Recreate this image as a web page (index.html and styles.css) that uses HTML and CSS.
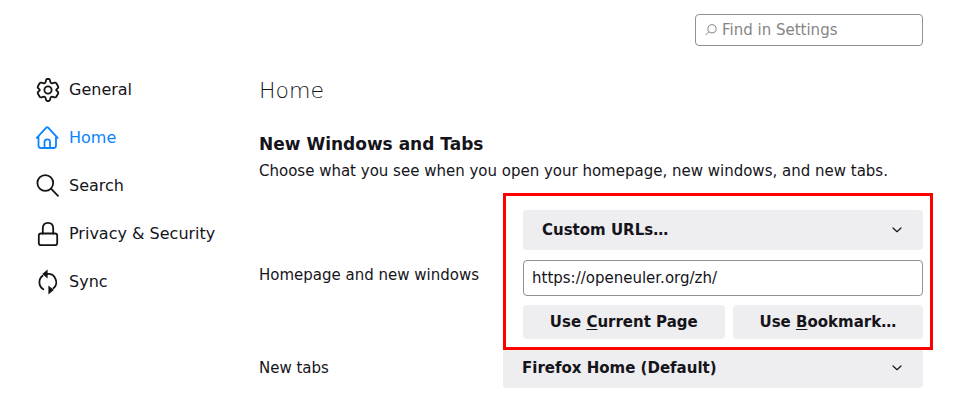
FILE: index.html
```html
<!DOCTYPE html>
<html lang="en">
<head>
<meta charset="utf-8">
<title>Settings</title>
<link rel="stylesheet" href="styles.css">
</head>
<body>
<div class="layout">
  <nav class="sidebar" aria-label="Settings categories">
    <a class="category" href="#general">
      <svg class="category-icon" viewBox="0 0 24 24" aria-hidden="true"><path d="M10.2 1.8Q10.5 1 11.3 1H12.7Q13.5 1 13.8 1.8L14.5 4.3Q15 5.1 16 5.4L18.8 4.7Q19.8 4.5 20.3 5.2L22.2 8.5Q22.6 9.2 22 10L20.3 11.7Q20 12 20.3 12.3L22 14Q22.6 14.8 22.2 15.5L20.3 18.8Q19.8 19.5 18.8 19.3L16 18.6Q15 18.9 14.5 19.7L13.8 22.2Q13.5 23 12.7 23H11.3Q10.5 23 10.2 22.2L9.5 19.7Q9 18.9 8 18.6L5.2 19.3Q4.2 19.5 3.7 18.8L1.8 15.5Q1.4 14.8 2 14L3.7 12.3Q4 12 3.7 11.7L2 10Q1.4 9.2 1.8 8.5L3.7 5.2Q4.2 4.5 5.2 4.7L8 5.4Q9 5.1 9.5 4.3Z"/><circle cx="12" cy="12" r="3.6"/></svg>
      <span>General</span>
    </a>
    <a class="category selected" href="#home" aria-current="page">
      <svg class="category-icon" viewBox="0 0 24 24" aria-hidden="true"><path d="M.8 11.8 10 1.8Q11.2.7 12.4 1.8L21.6 11.8M2.5 10V19.5Q2.5 22 5 22H17.5Q20 22 20 19.5V10M8.5 22V16Q8.5 13.3 11.3 13.3T14 16V22"/></svg>
      <span>Home</span>
    </a>
    <a class="category" href="#search">
      <svg class="category-icon" viewBox="0 0 24 24" aria-hidden="true"><circle cx="9.3" cy="9" r="7.9"/><path d="M15 14.7 22 21.8"/></svg>
      <span>Search</span>
    </a>
    <a class="category" href="#privacy">
      <svg class="category-icon" viewBox="0 0 24 24" aria-hidden="true"><rect x="2.8" y="11.5" width="18.4" height="11.7" rx="2.2"/><path d="M6.8 11.5V6Q7 .8 12 .8T17.2 6V11.5"/></svg>
      <span>Privacy &amp; Security</span>
    </a>
    <a class="category" href="#sync">
      <svg class="category-icon" viewBox="0 0 24 24" aria-hidden="true"><path d="M6.6 5.7A8.2 8.2 0 0 0 7.3 19.2M17.4 18.3A8.2 8.2 0 0 0 11 4"/><path class="solid" d="M11.6-.4V8.4L6.2 4ZM12.4 15.6V24.4L17.8 20Z"/></svg>
      <span>Sync</span>
    </a>
  </nav>

  <main class="content">
    <div class="search-field">
      <svg class="search-icon" viewBox="0 0 12 12" aria-hidden="true"><circle cx="7" cy="4.8" r="4.1"/><path d="M4 7.7.7 11"/></svg>
      <input class="search-input" type="search" placeholder="Find in Settings" aria-label="Find in Settings">
    </div>

    <h1 class="title">Home</h1>
    <h2 class="heading">New Windows and Tabs</h2>
    <p class="description">Choose what you see when you open your homepage, new windows, and new tabs.</p>

    <div class="row homepage-row">
      <label for="homepage-mode">Homepage and new windows</label>
      <div class="homepage-controls">
        <div class="dropdown">
          <select id="homepage-mode"><option>Custom URLs…</option></select>
          <svg class="chevron" viewBox="0 0 10 6" aria-hidden="true"><path d="M1 1 5 4.7 9 1"/></svg>
        </div>
        <input class="url-input" type="text" value="https://openeuler.org/zh/" aria-label="Homepage URL">
        <div class="actions">
          <button type="button">Use <u>C</u>urrent Page</button>
          <button type="button">Use <u>B</u>ookmark…</button>
        </div>
        <div class="highlight"></div>
      </div>
    </div>

    <div class="row">
      <label for="new-tabs">New tabs</label>
      <div class="dropdown">
        <select id="new-tabs"><option>Firefox Home (Default)</option></select>
        <svg class="chevron" viewBox="0 0 10 6" aria-hidden="true"><path d="M1 1 5 4.7 9 1"/></svg>
      </div>
    </div>
  </main>
</div>
</body>
</html>
```

FILE: styles.css
```css
* {
  box-sizing: border-box;
}

body {
  margin: 0;
  background: #fff;
  color: #15141a;
  font: 15px/20px "DejaVu Sans", sans-serif;
}

input,
select,
button {
  margin: 0;
  color: inherit;
  font: inherit;
}

.layout {
  display: flex;
}

.sidebar {
  flex: none;
  width: 259px;
  padding: 66px 0 0 36px;
}

.category {
  display: flex;
  align-items: center;
  gap: 9px;
  height: 48px;
  color: inherit;
  font-size: 16px;
  text-decoration: none;
}

.selected {
  color: #0a84ff;
}

.category-icon {
  width: 24px;
  height: 24px;
  overflow: visible;
  fill: none;
  stroke: currentColor;
  stroke-width: 1.8;
  stroke-linecap: round;
  stroke-linejoin: round;
}

.category-icon .solid {
  fill: currentColor;
  stroke: none;
}

.content {
  flex: 1;
  min-width: 0;
  padding: 14px 31px 24px 0;
}

.search-field {
  display: flex;
  align-items: center;
  gap: 5px;
  width: 228px;
  height: 32px;
  margin-left: auto;
  padding: 0 9px;
  border: 1px solid #8f8f95;
  border-radius: 4px;
}

.search-icon {
  flex: none;
  width: 12px;
  height: 12px;
  fill: none;
  stroke: #85858a;
  stroke-width: 1;
}

.search-input {
  flex: 1;
  min-width: 0;
  padding: 0;
  border: 0;
  outline: 0;
  background: none;
  appearance: none;
}

.search-input::placeholder {
  color: #858585;
}

.title {
  margin: 29px 0 0;
  font-size: 22px;
  line-height: 32px;
  font-weight: 200;
}

.heading {
  margin: 25px 0 0;
  font-size: 17px;
  line-height: 24px;
  font-weight: 700;
}

.description {
  margin: 5px 0 29px;
}

.row {
  display: grid;
  grid-template-columns: 244px 1fr;
  align-items: center;
}

.homepage-row {
  margin-bottom: 9px;
}

.homepage-controls {
  position: relative;
  margin-left: 20px;
}

.dropdown {
  position: relative;
}

.dropdown select {
  display: block;
  width: 100%;
  height: 40px;
  padding: 0 40px 0 19px;
  border: 0;
  border-radius: 4px;
  background: #eeeef0;
  font-weight: 700;
  appearance: none;
}

.chevron {
  position: absolute;
  top: 17px;
  right: 21px;
  width: 10px;
  height: 6px;
  fill: none;
  stroke: #15141a;
  stroke-width: 1.2;
  stroke-linecap: round;
  stroke-linejoin: round;
  pointer-events: none;
}

.url-input {
  display: block;
  width: 100%;
  height: 36px;
  margin: 10px 0 9px;
  padding: 0 8px;
  border: 1px solid #8f8f95;
  border-radius: 4px;
  background: #fff;
}

.actions {
  display: flex;
  gap: 8px;
}

.actions button {
  flex: 1 1 auto;
  height: 34px;
  padding: 0 8px;
  border: 0;
  border-radius: 4px;
  background: #eeeef0;
  font-weight: 700;
}

.actions u {
  text-underline-offset: 2px;
}

.highlight {
  position: absolute;
  z-index: 1;
  inset: -17px -10px -11px -20px;
  border: 3px solid #f00;
  pointer-events: none;
}
```
